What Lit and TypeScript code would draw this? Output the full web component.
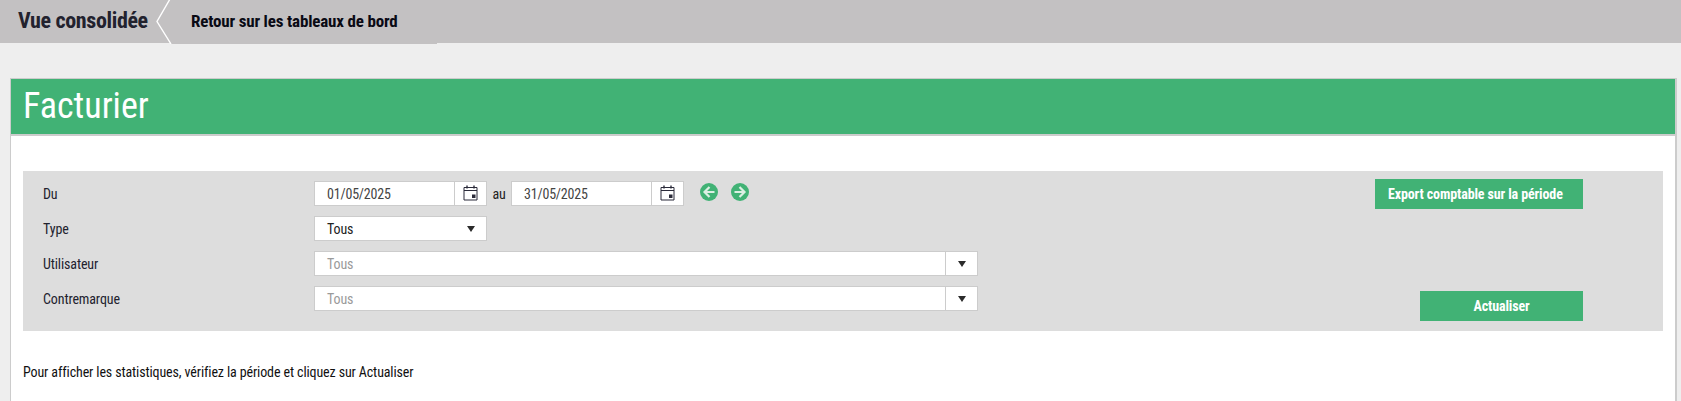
import { LitElement, html, css, svg } from "lit";
import { customElement } from "lit/decorators.js";

const cal = html`<svg class="cal" width="15" height="16" viewBox="0 0 15 16" aria-hidden="true">
  <path d="M1 2.5H14V15H1Z" fill="none" stroke="#2b2b3a" stroke-width="1"/>
  <path d="M1 5.5H14" stroke="#2b2b3a" stroke-width="1" fill="none"/>
  <path d="M4 0.5V3.5M11 0.5V3.5" stroke="#2b2b3a" stroke-width="1.4" fill="none"/>
  <rect x="9" y="9.5" width="3.5" height="3.5" fill="#2b2b3a"/>
</svg>`;

const arrow = (dir: "l" | "r") => html`<svg class="arrow" width="18" height="18" viewBox="0 0 18 18" aria-hidden="true">
  <circle cx="9" cy="9" r="9" fill="#41b275"/>
  ${dir === "l"
    ? svg`<path d="M14.5 9H5M9.5 4L4.5 9L9.5 14" fill="none" stroke="#dcefe3" stroke-width="2.2"/>`
    : svg`<path d="M3.5 9H13M8.5 4L13.5 9L8.5 14" fill="none" stroke="#dcefe3" stroke-width="2.2"/>`}
</svg>`;

@customElement("app-root")
export class AppRoot extends LitElement {
  static styles = css`
    :host {
      display: block;
      height: 401px;
      overflow: hidden;
      background: #eeeeee;
      font-family: "Roboto", "Liberation Sans", sans-serif;
      font-stretch: 75%;
      color: #222;
      font-size: 14px;
      letter-spacing: -0.12px;
    }
    .top {
      display: flex;
      height: 43px;
      background: #c3c1c2;
    }
    .title {
      width: 155px;
      padding-left: 18px;
      box-sizing: border-box;
      font-size: 22px;
      letter-spacing: -0.35px;
      font-weight: 700;
      line-height: 41px;
      color: #22222e;
      white-space: nowrap;
    }
    .chev { display: block; flex: none; }
    .back {
      height: 44px;
      width: 246px;
      background: #c3c1c2;
      padding-left: 19px;
      font-size: 17px;
      letter-spacing: -0.17px;
      font-weight: 700;
      line-height: 42px;
      color: #0a0a14;
      white-space: nowrap;
    }
    .panel {
      margin: 35px 4px 0 10px;
      border: 1px solid #cccccc;
      border-right-width: 2px;
      background: #fff;
      height: 330px;
    }
    .head {
      height: 55px;
      background: #41b275;
      border-bottom: 2px solid #cccccc;
      color: #fff;
      font-size: 36px;
      letter-spacing: 0;
      line-height: 55px;
      padding-left: 12px;
    }
    .form {
      display: flex;
      justify-content: space-between;
      margin: 35px 12px 0 12px;
      height: 160px;
      box-sizing: border-box;
      padding: 8px 80px 10px 20px;
      background: #dddddd;
    }
    .fields { display: flex; flex-direction: column; gap: 10px; padding-top: 2px; }
    .row { display: flex; align-items: center; height: 25px; }
    .label { width: 271px; color: #22222e; }
    .box {
      display: flex;
      align-items: stretch;
      height: 25px;
      box-sizing: border-box;
      border: 1px solid #cccccc;
      background: #fff;
    }
    .val { flex: 1; padding-left: 12px; line-height: 25px; color: #333; }
    .val.date { color: #444; letter-spacing: -0.2px; }
    .val.ph { color: #9a9a9a; }
    .addon {
      flex: none;
      display: flex;
      align-items: center;
      justify-content: center;
      border-left: 1px solid #cccccc;
    }
    .d1 { width: 173px; }
    .d2 { width: 173px; }
    .addon.c { width: 32px; padding-bottom: 1px; box-sizing: border-box; }
    .au { width: 24px; text-align: center; }
    .arrows { display: flex; gap: 13px; margin-left: 16px; margin-top: -3px; }
    .cal, .arrow { display: block; }
    .sel { width: 173px; }
    .wide { width: 664px; }
    .caret {
      width: 0; height: 0;
      border-left: 4px solid transparent;
      border-right: 4px solid transparent;
      border-top: 6px solid #2b2b2b;
    }
    .sel .val { color: #222; }
    .sel .addon { border-left: 0; width: 32px; padding-left: 1px; box-sizing: border-box; }
    .wide .addon { width: 31px; }
    .actions {
      display: flex;
      flex-direction: column;
      justify-content: space-between;
      align-items: flex-end;
    }
    .btn {
      height: 30px;
      box-sizing: border-box;
      background: #41b275;
      color: #fff;
      font-weight: 700;
      font-size: 14px;
      line-height: 30px;
      white-space: nowrap;
    }
    .export { width: 208px; padding-left: 13px; }
    .refresh { width: 163px; text-align: center; }
    .hint { margin: 32px 12px 0; color: #111; line-height: 18px; }
  `;

  render() {
    return html`
      <div class="top">
        <div class="title">Vue consolidée</div>
        <svg class="chev" width="17" height="44" viewBox="0 0 17 44" aria-hidden="true">
          <path d="M15 -1L2 21.5L16 44H17V-1Z" fill="#c3c1c2"/>
          <path d="M15 -1L2 21.5L16 44" fill="none" stroke="#fff" stroke-width="1.4"/>
        </svg>
        <div class="back">Retour sur les tableaux de bord</div>
      </div>
      <div class="panel">
        <div class="head">Facturier</div>
        <div class="form">
          <div class="fields">
            <div class="row">
              <div class="label">Du</div>
              <div class="box d1"><div class="val date">01/05/2025</div><div class="addon c">${cal}</div></div>
              <div class="au">au</div>
              <div class="box d2"><div class="val date">31/05/2025</div><div class="addon c">${cal}</div></div>
              <div class="arrows">${arrow("l")}${arrow("r")}</div>
            </div>
            <div class="row">
              <div class="label">Type</div>
              <div class="box sel"><div class="val">Tous</div><div class="addon"><span class="caret"></span></div></div>
            </div>
            <div class="row">
              <div class="label">Utilisateur</div>
              <div class="box wide"><div class="val ph">Tous</div><div class="addon"><span class="caret"></span></div></div>
            </div>
            <div class="row">
              <div class="label">Contremarque</div>
              <div class="box wide"><div class="val ph">Tous</div><div class="addon"><span class="caret"></span></div></div>
            </div>
          </div>
          <div class="actions">
            <div class="btn export">Export comptable sur la période</div>
            <div class="btn refresh">Actualiser</div>
          </div>
        </div>
        <div class="hint">Pour afficher les statistiques, vérifiez la période et cliquez sur Actualiser</div>
      </div>
    `;
  }
}
